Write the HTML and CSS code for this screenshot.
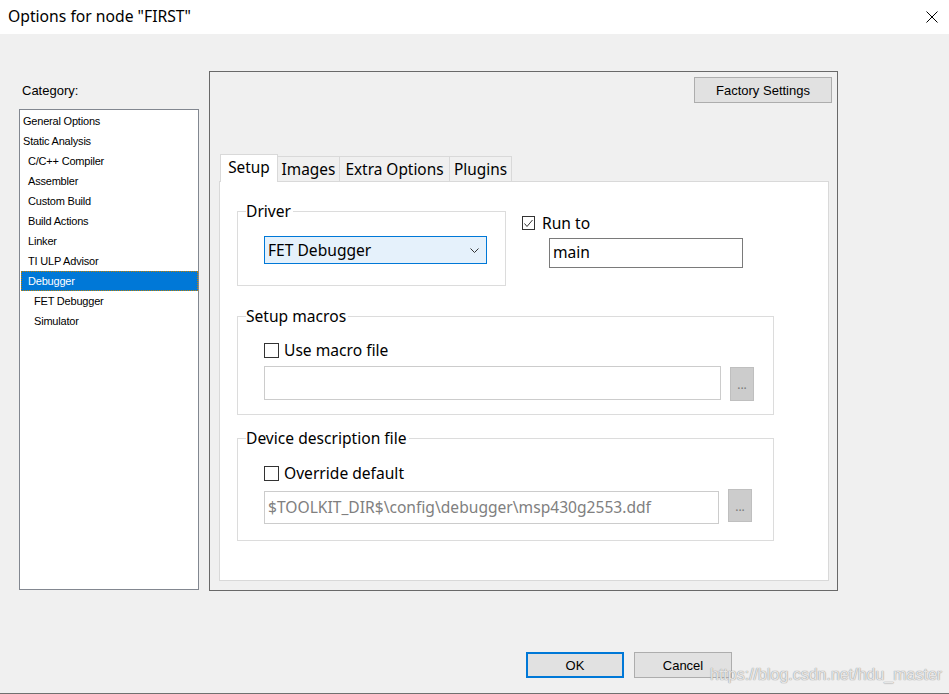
FILE: index.html
```html
<!DOCTYPE html><html><head><meta charset="utf-8">
<meta name="viewport" content="initial-scale=1.0, width=device-width">
<title>Options for node "FIRST"</title>
<link rel="stylesheet" href="styles.css">
</head>
<body>
<div class="window">

<div class="titlebar">
  <span class="title">Options for node "FIRST"</span>
  <svg class="close" viewBox="0 0 12 12" width="12" height="12">
    <path d="M0.5 0.5 L11.5 11.5 M11.5 0.5 L0.5 11.5" />
  </svg>
</div>

<div class="main">
  <div class="category">
    <div class="cat-label">Category:</div>
    <ul class="cat-list">
      <li class="lv0">General Options</li>
      <li class="lv0">Static Analysis</li>
      <li class="lv1">C/C++ Compiler</li>
      <li class="lv1">Assembler</li>
      <li class="lv1">Custom Build</li>
      <li class="lv1">Build Actions</li>
      <li class="lv1">Linker</li>
      <li class="lv1">TI ULP Advisor</li>
      <li class="lv1 selected">Debugger</li>
      <li class="lv2">FET Debugger</li>
      <li class="lv2">Simulator</li>
    </ul>
  </div>

  <div class="panel">
    <div class="panel-top">
      <button type="button" class="btn factory">Factory Settings</button>
    </div>

    <div class="tabs">
      <div class="tab active">Setup</div>
      <div class="tab">Images</div>
      <div class="tab">Extra Options</div>
      <div class="tab">Plugins</div>
    </div>

    <div class="tab-body">
      <div class="row-top">
        <fieldset class="group driver">
          <legend>Driver</legend>
          <div class="combo">
            <span>FET Debugger</span>
            <svg class="chev" viewBox="0 0 9 5" width="9" height="5"><path d="M0.5 0.5 L4.5 4.5 L8.5 0.5" /></svg>
          </div>
        </fieldset>
        <div class="runto">
          <div class="check small">
            <span class="box"><svg viewBox="0 0 11 11" width="11" height="11"><path d="M1.5 5.5 L4 8.5 L9.5 2" /></svg></span>
            <span>Run to</span>
          </div>
          <div class="field main-field">main</div>
        </div>
      </div>

      <fieldset class="group wide macros">
        <legend>Setup macros</legend>
        <div class="check"><span class="box"></span><span>Use macro file</span></div>
        <div class="path-row">
          <div class="field path"></div>
          <div class="browse">...</div>
        </div>
      </fieldset>

      <fieldset class="group wide device">
        <legend>Device description file</legend>
        <div class="check"><span class="box"></span><span>Override default</span></div>
        <div class="path-row">
          <div class="field path dim">$TOOLKIT_DIR$\config\debugger\msp430g2553.ddf</div>
          <div class="browse">...</div>
        </div>
      </fieldset>
    </div>
  </div>
</div>

<div class="footer">
  <button type="button" class="btn dlg default">OK</button>
  <button type="button" class="btn dlg">Cancel</button>
</div>

<div class="watermark">https://blog.csdn.net/hdu_master</div>

</div>
</body>
</html>
```

FILE: styles.css
```css
html,body,div,ul,li,fieldset,legend,button{margin:0;padding:0;}
*{box-sizing:border-box;}
body{
  color:#000;
  background:#f0f0f0;
  font-family:"Noto Sans","Open Sans",Arial,sans-serif;
  font-size:15.6px;
}
.window{
  position:relative;
  width:949px;
  height:694px;
  overflow:hidden;
  border-bottom:1px solid #707070;
}

/* title bar */
.titlebar{
  height:34px;
  background:#fff;
  display:flex;
  align-items:center;
  justify-content:space-between;
  padding:0 11px 3px 8px;
}
.title{font-size:15.7px;line-height:20px;}
.close{stroke:#000;stroke-width:1;fill:none;margin-top:3px;}

.main{display:flex;padding:37px 0 0 19px;}

/* category list */
.category{width:180px;padding-top:12px;}
.cat-label{
  font-family:"Liberation Sans",Arial,sans-serif;
  font-size:13px;line-height:16px;
  padding-left:3px;margin-bottom:10px;
}
.cat-list{
  list-style:none;
  height:481px;
  background:#fff;
  border:1px solid #828790;
  padding:1px 0 0 1px;
  font-family:"Liberation Sans",Arial,sans-serif;
  font-size:11px;
  letter-spacing:-0.2px;
}
.cat-list li{height:20px;line-height:20px;white-space:nowrap;}
.cat-list .lv0{padding-left:2px;}
.cat-list .lv1{padding-left:7px;}
.cat-list .lv2{padding-left:13px;}
.cat-list .selected{
  background:#0078d7;color:#fff;
  outline:1px dotted #c08000;outline-offset:-1px;
}

/* right panel */
.panel{
  width:629px;height:520px;
  margin-left:10px;
  border:1px solid #696969;
  padding:5px 5px 9px 9px;
  display:flex;flex-direction:column;
}
.panel-top{display:flex;justify-content:flex-end;}
.btn{
  font-family:"Liberation Sans",Arial,sans-serif;
  font-size:13px;
  color:#000;
  background:#e1e1e1;
  border:1px solid #adadad;
}
.factory{width:138px;height:26px;}

.tabs{display:flex;align-items:flex-end;margin:51px 0 0 1px;position:relative;z-index:1;}
.tab{
  height:25px;line-height:26px;
  border:1px solid #d9d9d9;border-bottom:none;
  margin-right:-1px;
  background:#f0f0f0;
  text-align:center;
  white-space:nowrap;
  font-size:15.4px;
}
.tab:nth-child(1){width:58px;}
.tab:nth-child(2){width:63px;}
.tab:nth-child(3){width:111px;}
.tab:nth-child(4){width:63px;}
.tab.active{
  height:28px;line-height:25px;
  background:#fff;margin-bottom:-1px;
}

.tab-body{
  flex:1;
  margin-right:3px;
  background:#fff;
  border:1px solid #d9d9d9;
  padding:19px 0 0 17px;
}

/* group boxes */
.group{
  border:1px solid #dcdcdc;
  padding:0 0 0 8px;
  min-width:0;
}
.group legend{padding:0 2px 0 0;line-height:20px;}
.row-top{display:flex;align-items:flex-start;}
.driver{width:269px;padding-top:15px;padding-bottom:21px;}
.combo{
  margin-left:18px;
  width:223px;height:28px;
  background:#e5f1fb;
  border:1px solid #0078d7;
  display:flex;align-items:center;justify-content:space-between;
  padding:0 7px 0 3px;
}
.chev{stroke:#333;stroke-width:1;fill:none;}

.runto{margin:12px 0 0 16px;}
.check{display:flex;align-items:center;height:20px;line-height:20px;}
.box{
  width:15px;height:15px;
  border:1px solid #333;background:#fff;
  margin-right:5px;
  display:flex;align-items:center;justify-content:center;
}
.check.small .box{width:13px;height:14px;margin-right:7px;}
.box svg{stroke:#333;stroke-width:1;fill:none;}
.field{
  height:30px;line-height:26px;
  border:1px solid #cccccc;
  padding:0 4px;
  white-space:nowrap;overflow:hidden;
  background:#fff;
}
.main-field{width:194px;margin:5px 0 0 27px;border-color:#7a7a7a;padding-left:3px;}

.wide{width:537px;}
.macros{margin-top:20px;padding-top:14px;padding-bottom:13px;}
.device{margin-top:13px;padding-top:15px;padding-bottom:16px;}
.group .check{margin-left:18px;}
.path-row{display:flex;align-items:flex-start;margin:6px 0 0 18px;}
.device .path-row{margin-top:8px;}
.path{width:457px;height:34px;line-height:30px;}
.device .path{width:455px;height:33px;padding-left:3px;}
.dim{color:#808080;}
.browse{
  width:24px;height:34px;
  margin:1px 0 0 9px;
  background:#cccccc;border:1px solid #bfbfbf;
  color:#7a7a7a;font-size:12px;
  text-align:center;line-height:34px;
}
.device .browse{margin-top:-2px;height:33px;}

/* dialog buttons */
.footer{display:flex;gap:10px;padding:61px 0 0 526px;}
.dlg{width:98px;height:26px;}
.dlg.default{border:2px solid #0078d7;}

.watermark{
  position:absolute;left:710px;top:666px;
  font-family:"Liberation Sans",Arial,sans-serif;
  font-size:16px;
  color:rgba(255,255,255,0.75);
  text-shadow:0 0 1px #999,0 0 1px #999;
  white-space:nowrap;
}
```
